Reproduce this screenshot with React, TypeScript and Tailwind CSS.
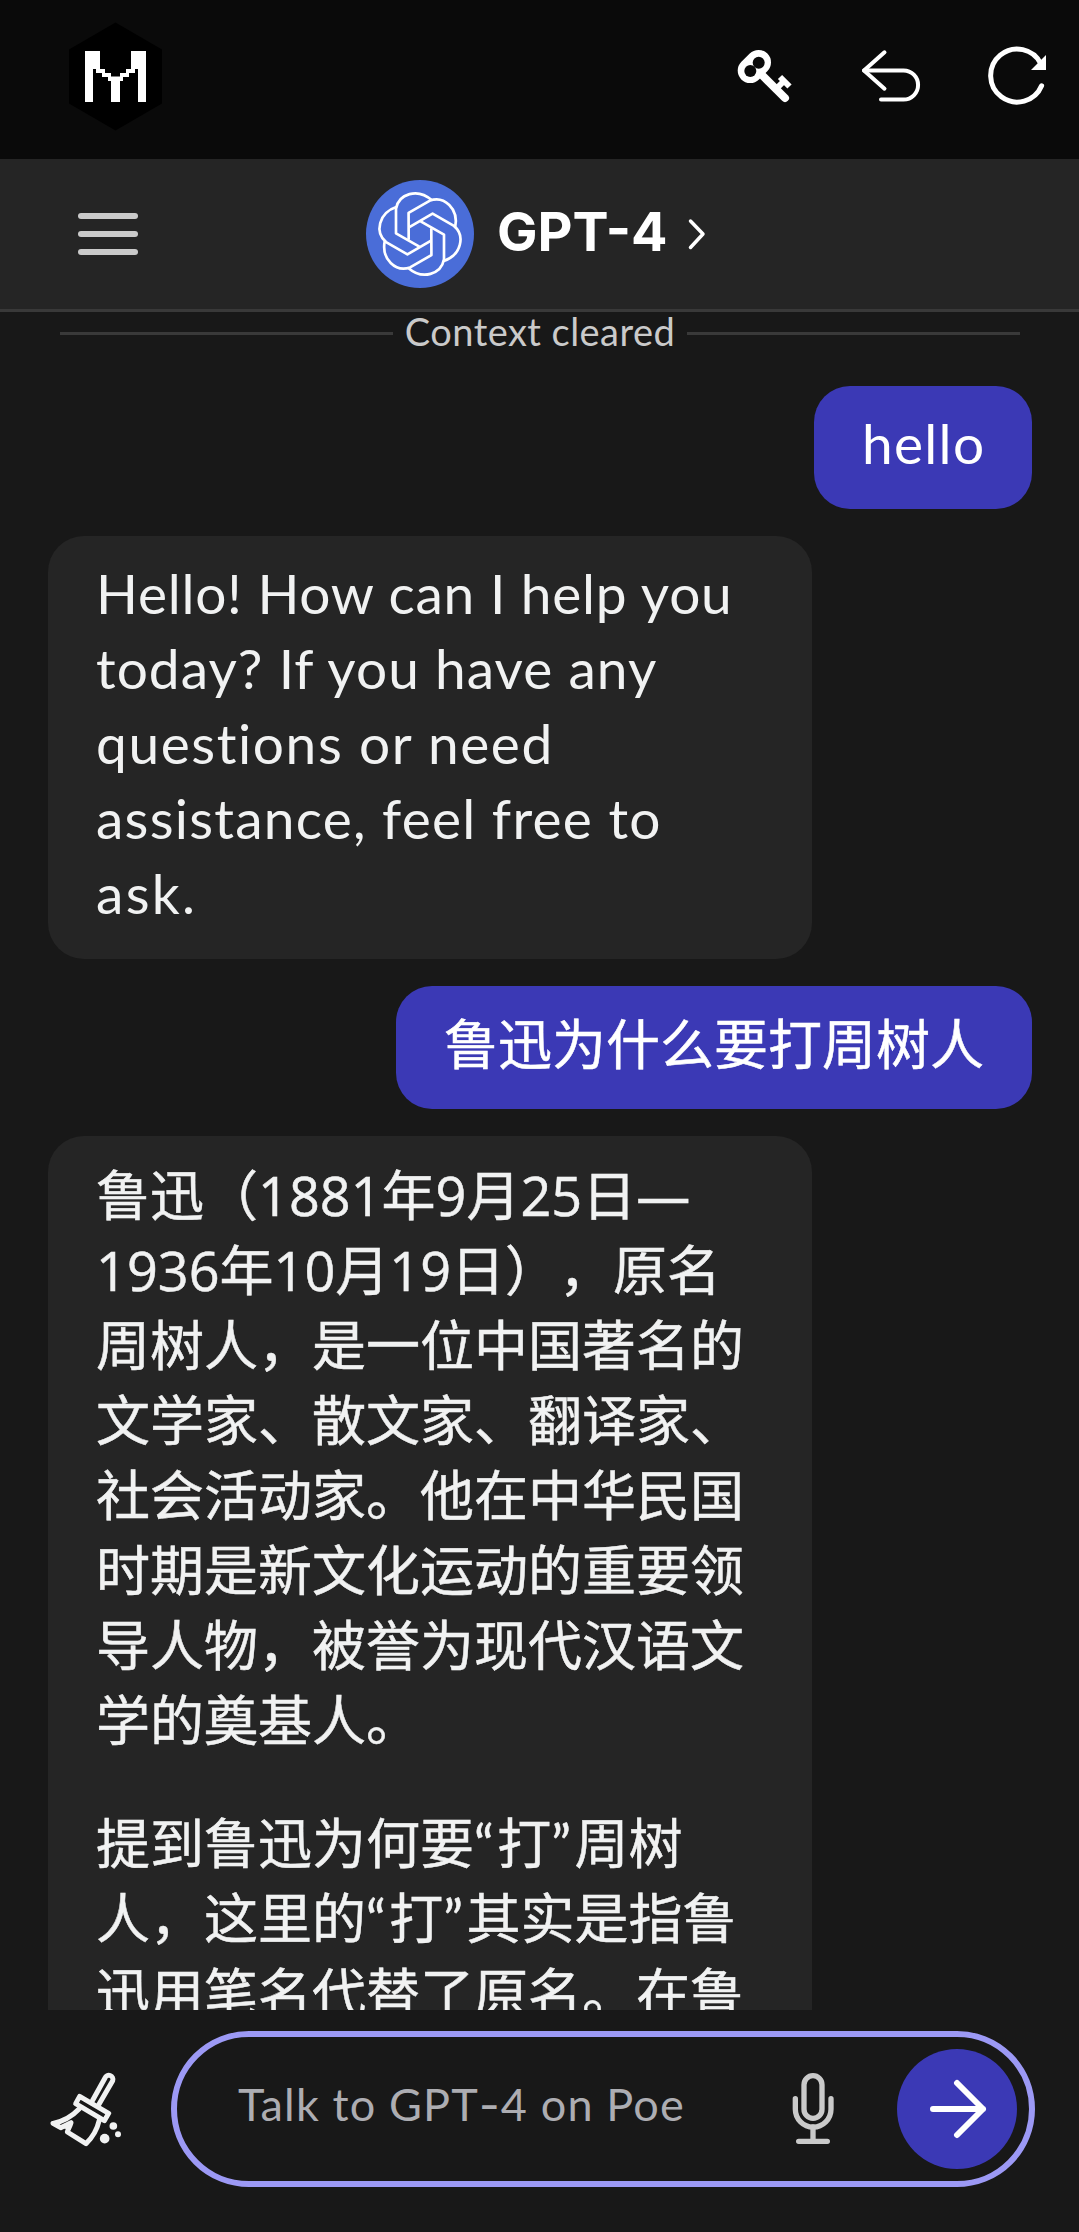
import type { ReactNode } from 'react'

function LogoIcon() {
  return (
    <svg className="w-[93px] h-[109px]" viewBox="69 22 93 109">
      <path d="M115.5 22.5 162 49.5V103.5L115.5 130.5 69 103.5V49.5Z" fill="#000" />
      <path
        d="M85 51H100V69H105V73H111V76.5H120V73H126V69H131V51H146V102H138V69H135V73H129V77H123V81H120V102H111V81H108V77H102V73H96V69H93V102H85Z"
        fill="#fff"
      />
    </svg>
  )
}

function KeyIcon() {
  return (
    <svg className="w-[56px] h-[56px]" viewBox="737 48 56 56" fill="none" stroke="#fff">
      <path d="M750.2 70.6 758.5 62.4" strokeWidth="25" strokeLinecap="round" />
      <path d="M762 75 785 98" strokeWidth="8" strokeLinecap="round" />
      <path d="M776 89 785 80" strokeWidth="6" />
      <path d="M780 77 789.5 86.5" strokeWidth="6" />
      <circle cx="758.7" cy="62.8" r="6" fill="#0a0a0a" stroke="none" />
      <circle cx="750.3" cy="71" r="6" fill="#0a0a0a" stroke="none" />
    </svg>
  )
}

function UndoIcon() {
  return (
    <svg
      className="w-[60px] h-[56px]"
      viewBox="861 48 60 56"
      fill="none"
      stroke="#fff"
      strokeWidth="4"
      strokeLinecap="round"
      strokeLinejoin="round"
    >
      <path d="M884.5 52.3 864 70.4 884.5 88.7" />
      <path d="M864 70.4H903.5A14.6 14.6 0 0 1 903.5 99.6H881" />
    </svg>
  )
}

function ReloadIcon() {
  return (
    <svg className="w-[60px] h-[60px]" viewBox="987 46 60 60" fill="none">
      <path
        d="M1041.6 85.8A26.5 26.5 0 1 1 1041 64"
        stroke="#fff"
        strokeWidth="5"
        strokeLinecap="round"
      />
      <path d="M1046 55V70H1031Z" fill="#fff" />
    </svg>
  )
}

const petals = [0, 60, 120, 180, 240, 300]

function BotAvatar() {
  return (
    <svg className="w-[108px] h-[108px]" viewBox="-162 -162 324 324">
      <circle r="162" fill="#4a6dd8" />
      <g fill="none" stroke="#fff" strokeWidth="8" strokeLinejoin="round">
        {petals.map((angle) => (
          <path
            key={angle}
            d="M-2 38-72-2V-76C-64-120-8-140 36-101"
            transform={`rotate(${angle})`}
          />
        ))}
      </g>
    </svg>
  )
}

function BroomIcon() {
  return (
    <svg
      className="w-[74px] h-[78px]"
      viewBox="60 270 222 234"
      fill="none"
      stroke="#f1f2f2"
      strokeWidth="15"
      strokeLinecap="round"
      strokeLinejoin="round"
    >
      <path d="M188 361 225 294A11 11 0 0 1 248 302L207 373" />
      <path d="M149 349 236 400 223 422 137 371Z" />
      <path d="M148 386C126 409 100 424 69 430L92 443 123 428C120 440 114 446 112 456L168 491C190 470 202 446 208 420" />
      <path d="M100 440 124 428 118 446Z" fill="#f1f2f2" strokeWidth="8" />
      <g fill="#f1f2f2" stroke="none">
        <circle cx="250" cy="438" r="11.5" />
        <circle cx="264" cy="463" r="9" />
        <circle cx="224" cy="476" r="14.5" />
      </g>
    </svg>
  )
}

function MicIcon() {
  return (
    <svg
      className="w-[46px] h-[78px]"
      viewBox="150 270 138 234"
      fill="none"
      stroke="#cacaca"
      strokeWidth="16"
      strokeLinecap="round"
    >
      <rect x="192" y="287" width="54" height="128" rx="27" />
      <path d="M166 356V388A53.5 53.5 0 0 0 273 388V356" />
      <path d="M219 441V484M176 484H262" />
    </svg>
  )
}

function Bubble({ mine, children }: { mine?: boolean; children: ReactNode }) {
  return (
    <div
      className={
        mine
          ? 'self-end shrink-0 rounded-[36px] bg-[#3b39b5] px-12 pt-5 pb-7 text-white'
          : 'self-start shrink-0 w-[764px] rounded-[36px] bg-[#252525] px-12 pt-5 pb-7 text-[#f1f2f2]'
      }
    >
      {children}
    </div>
  )
}

const bio = [
  '鲁迅（1881年9月25日—',
  '1936年10月19日），原名',
  '周树人，是一位中国著名的',
  '文学家、散文家、翻译家、',
  '社会活动家。他在中华民国',
  '时期是新文化运动的重要领',
  '导人物，被誉为现代汉语文',
  '学的奠基人。',
]

// 引号单独加字距
function Quoted({ children }: { children: string }) {
  return (
    <>
      <span className="tracking-[3.5px]">“</span>
      {children}
      <span className="tracking-[3.5px]">”</span>
    </>
  )
}

export default function App() {
  return (
    <div className="flex flex-col w-[1079px] h-[2232px] overflow-hidden bg-[#181818] font-[Lato,'Noto_Sans_CJK_SC',sans-serif]">
      {/* 顶部工具栏 */}
      <div className="flex items-center h-[159px] shrink-0 bg-[#0a0a0a] pl-[69px] pr-8 pb-[7px]">
        <LogoIcon />
        <div className="flex items-center ml-auto">
          <KeyIcon />
          <div className="ml-[68px]">
            <UndoIcon />
          </div>
          <div className="ml-[66px]">
            <ReloadIcon />
          </div>
        </div>
      </div>

      {/* 标题栏 */}
      <header className="grid grid-cols-[366px_1fr] items-center h-[153px] shrink-0 bg-[#252525] border-b-[3px] border-[#393939]">
        <div className="flex flex-col gap-3 pl-[78px]">
          <div className="w-[60px] h-[6px] rounded-full bg-[#cacaca]" />
          <div className="w-[60px] h-[6px] rounded-full bg-[#cacaca]" />
          <div className="w-[60px] h-[6px] rounded-full bg-[#cacaca]" />
        </div>
        <div className="flex items-center">
          <BotAvatar />
          <h1 className="ml-[23px] w-[189px] pb-[5px] text-[54px] leading-[66px] font-bold text-white whitespace-nowrap font-[Inter,sans-serif]">
            GPT-4
          </h1>
          <svg className="w-[20px] h-[32px]" viewBox="0 0 20 32" fill="none">
            <path
              d="M4.5 3 17 16 4.5 29.500"
              stroke="#fff"
              strokeWidth="3.5"
              strokeLinecap="round"
              strokeLinejoin="round"
            />
          </svg>
        </div>
      </header>

      {/* 聊天记录 */}
      <main className="flex-1 min-h-0 overflow-hidden flex flex-col pl-12 pr-[47px] text-[54px] leading-[75px] whitespace-nowrap">
        <div className="flex items-center h-[43px] shrink-0 px-3">
          <div className="flex-1 h-[3px] bg-[#393939]" />
          <span className="w-[294px] pb-[5px] text-center text-[38px] leading-[38px] tracking-[0.45px] text-[#cacaca]">
            Context cleared
          </span>
          <div className="flex-1 h-[3px] bg-[#393939]" />
        </div>

        <div className="flex flex-col gap-[27px] mt-[31px]">
          <Bubble mine>
            <p className="w-[122px] text-[55px] tracking-[1.3px]">hello</p>
          </Bubble>

          <Bubble>
            <div className="text-[55px]">
              <p className="tracking-[0.75px]">Hello! How can I help you</p>
              <p className="tracking-[1.05px]">today? If you have any</p>
              <p className="tracking-[1.6px]">questions or need</p>
              <p className="tracking-[1.25px]">assistance, feel free to</p>
              <p className="tracking-[2.3px]">ask.</p>
            </div>
          </Bubble>

          <Bubble mine>
            <p lang="zh-CN" className="pt-px -mb-px [-webkit-text-stroke:0.5px]">
              鲁迅为什么要打周树人
            </p>
          </Bubble>

          <Bubble>
            <div className="pt-[2px] [-webkit-text-stroke:0.5px] [text-spacing-trim:space-all]">
              <div lang="zh-CN" className="font-['Open_Sans','Noto_Sans_CJK_SC',sans-serif]">
                {bio.map((line) => (
                  <p key={line}>{line}</p>
                ))}
              </div>
              <div lang="zh-CN" className="mt-12">
                <p>
                  提到鲁迅为何要<Quoted>打</Quoted>周树
                </p>
                <p>
                  人，这里的<Quoted>打</Quoted>其实是指鲁
                </p>
                <p>迅用笔名代替了原名。在鲁</p>
              </div>
            </div>
          </Bubble>
        </div>
      </main>

      {/* 输入栏 */}
      <footer className="flex items-start h-[222px] shrink-0 pt-[21px] pl-[50px] pr-11">
        <div className="flex items-center h-[156px]">
          <BroomIcon />
        </div>
        <div className="flex items-center flex-1 h-[156px] ml-[47px] rounded-full border-[6px] border-[#9c99f5] pl-[61px] pr-3">
          <span className="pb-[10px] text-[45px] leading-[54px] tracking-[1.15px] text-[#adadb2] whitespace-nowrap">
            Talk to GPT<span className="font-[Inter,sans-serif]">-</span>4 on Poe
          </span>
          <div className="ml-auto mr-[61px]">
            <MicIcon />
          </div>
          <button className="flex items-center justify-center w-[120px] h-[120px] rounded-full bg-[#3b39b5]">
            <svg
              className="w-[60px] h-[60px]"
              viewBox="0 0 60 60"
              fill="none"
              stroke="#fff"
              strokeWidth="6"
              strokeLinecap="round"
              strokeLinejoin="round"
            >
              <path d="M6 30H56M30 4 56 30 30 56" />
            </svg>
          </button>
        </div>
      </footer>
    </div>
  )
}
